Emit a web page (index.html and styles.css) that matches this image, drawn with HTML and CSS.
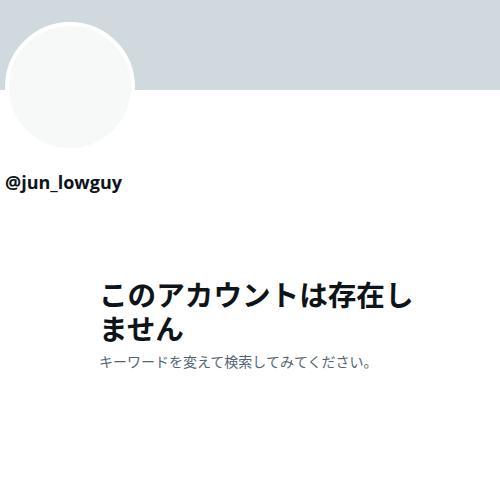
FILE: index.html
```html
<!DOCTYPE html>
<html lang="ja">
<head>
    <meta charset="UTF-8">
    <meta name="viewport" content="width=device-width, initial-scale=1.0">
    <title>@jun_lowguy</title>
    <link rel="stylesheet" href="styles.css">
</head>
<body>
    <div class="profile-banner"></div>

    <div class="profile-head">
        <div class="avatar"></div>
        <div class="handle">@jun_lowguy</div>
    </div>

    <div class="empty-state">
        <div class="empty-title">このアカウントは存在しません</div>
        <div class="empty-text">キーワードを変えて検索してみてください。</div>
    </div>
</body>
</html>
```

FILE: styles.css
```css
* {
    margin: 0;
    padding: 0;
    box-sizing: border-box;
}

body {
    width: 500px;
    background: #ffffff;
    font-family: 'Open Sans', 'Noto Sans CJK JP', sans-serif;
    color: #0f1419;
}

.profile-banner {
    height: 90px;
    background-color: #cfd9de;
}

.profile-head {
    padding-left: 5px;
}

.avatar {
    width: 130px;
    height: 130px;
    margin-top: -68px;
    border-radius: 50%;
    border: 4px solid #ffffff;
    background-color: #f7f9f9;
}

.handle {
    margin-top: 18px;
    font-size: 18px;
    font-weight: 700;
    line-height: 24px;
}

.empty-state {
    width: 330px;
    margin: 83px 0 0 99px;
}

.empty-title {
    font-family: 'Noto Sans CJK JP', sans-serif;
    font-size: 28.6px;
    font-weight: 700;
    line-height: 34px;
}

.empty-text {
    margin-top: 7px;
    font-family: 'Noto Sans CJK JP', sans-serif;
    font-size: 14px;
    line-height: 18px;
    color: #536471;
}
```
